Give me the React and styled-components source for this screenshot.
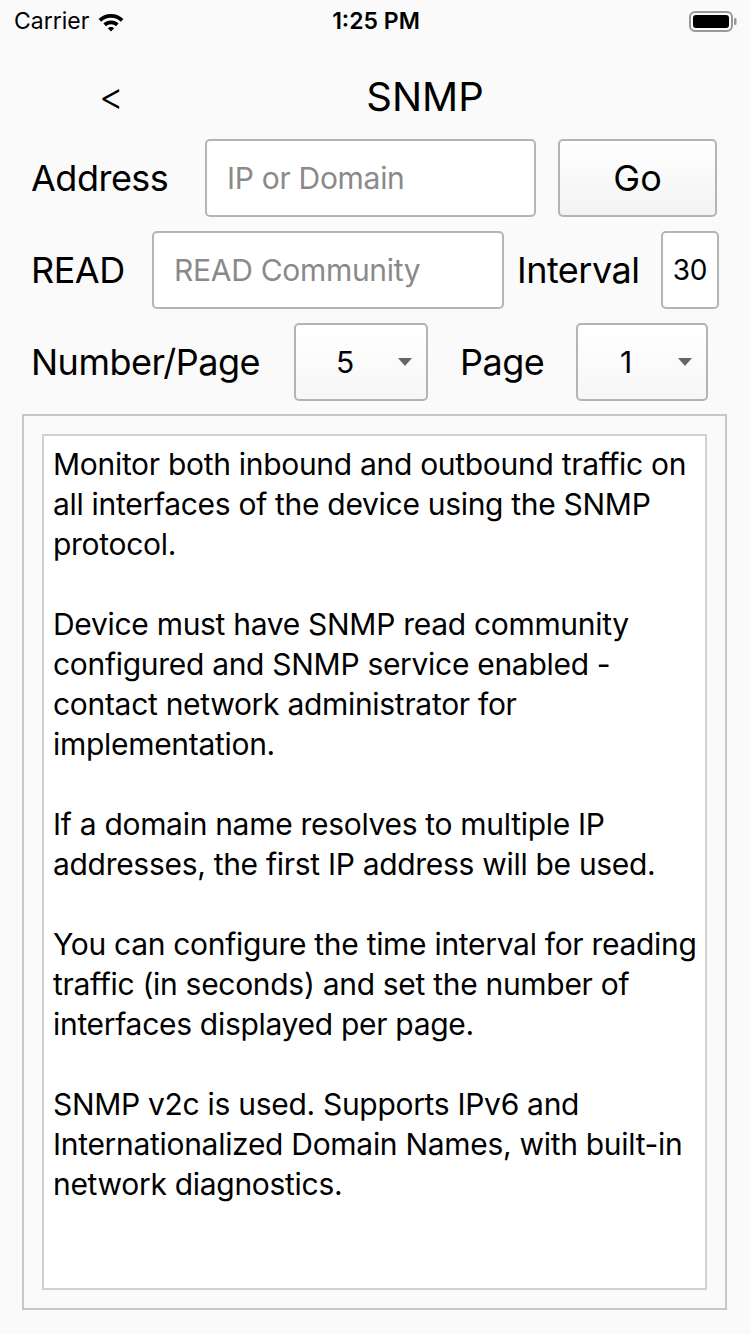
import React from 'react'
import styled, { createGlobalStyle } from 'styled-components'

const GlobalStyle = createGlobalStyle`
  html, body {
    margin: 0;
    padding: 0;
    background: #fafafa;
    font-family: Inter, "Liberation Sans", sans-serif;
    color: #000;
  }
`

const Page = styled.div`
  width: 750px;
  height: 1334px;
  background: #fafafa;
  overflow: hidden;
`

const StatusBar = styled.div`
  height: 42px;
  display: flex;
  align-items: center;
  padding: 0 12px 0 14px;
  font-size: 23px;
`

const Carrier = styled.div`
  display: flex;
  align-items: center;
  gap: 8px;
  flex: 1;
`

const Clock = styled.div`
  font-weight: 600;
  flex: 1;
  text-align: center;
`

const BatteryWrap = styled.div`
  flex: 1;
  display: flex;
  justify-content: flex-end;
`

const NavBar = styled.div`
  height: 86px;
  padding-top: 11px;
  display: flex;
  align-items: center;
`

const Back = styled.div`
  width: 125px;
  padding-left: 99px;
  box-sizing: border-box;
  font-size: 38px;
  font-weight: 300;
`

const Title = styled.div`
  width: 600px;
  text-align: center;
  font-size: 40px;
`

const Rows = styled.div`
  display: flex;
  flex-direction: column;
  gap: 14px;
  padding-left: 31px;
`

const Row = styled.div`
  display: flex;
  align-items: center;
  height: 78px;
`

const Label = styled.div`
  width: ${p => p.$w}px;
  margin-right: ${p => p.$gap}px;
  font-size: 36px;
  white-space: nowrap;
  letter-spacing: -0.5px;
`

const Field = styled.div`
  width: ${p => p.$w}px;
  height: 78px;
  margin-right: ${p => p.$gap || 0}px;
  box-sizing: border-box;
  border: 2px solid #b4b4b4;
  border-radius: 5px;
  background: #fff;
  display: flex;
  align-items: center;
  justify-content: ${p => (p.$center ? 'center' : 'flex-start')};
  padding: 0 ${p => (p.$center ? 0 : 20)}px;
  font-size: ${p => (p.$small ? 28 : 30)}px;
  letter-spacing: -0.3px;
  color: ${p => (p.$placeholder ? '#8a8a8a' : '#000')};
`

const Button = styled.div`
  width: 159px;
  height: 78px;
  box-sizing: border-box;
  border: 2px solid #b4b4b4;
  border-radius: 5px;
  background: linear-gradient(#ffffff, #f3f3f3);
  display: flex;
  align-items: center;
  justify-content: center;
  font-size: 36px;
`

const Select = styled.div`
  width: ${p => p.$w}px;
  height: 78px;
  margin-right: ${p => p.$gap || 0}px;
  box-sizing: border-box;
  border: 2px solid #b4b4b4;
  border-radius: 5px;
  background: linear-gradient(#ffffff, #f7f7f7);
  display: flex;
  align-items: center;
  padding-left: ${p => p.$pl}px;
  padding-right: 14px;
  font-size: 30px;
`

const SelectValue = styled.span`
  flex: 1;
`

const Caret = styled.span`
  width: 0;
  height: 0;
  border-left: 7px solid transparent;
  border-right: 7px solid transparent;
  border-top: 8px solid #666;
`

const Panel = styled.div`
  margin: 13px 23px 0 22px;
  height: 896px;
  box-sizing: border-box;
  border: 2px solid #c8c8c8;
  padding: 18px;
`

const TextBox = styled.div`
  height: 100%;
  box-sizing: border-box;
  border: 2px solid #d0d0d0;
  background: #fff;
  padding: 8px 9px;
  font-size: 30px;
  line-height: 40px;
  white-space: pre;
  letter-spacing: -0.3px;
`

const Wifi = () => (
  <svg width="28" height="22" viewBox="0 0 28 22">
    <path d="M14 4C9 4 4.8 5.9 1.6 9l2.6 2.7C6.7 9.2 10.2 7.7 14 7.7s7.3 1.5 9.8 4L26.4 9C23.2 5.9 19 4 14 4z" fill="#000" />
    <path d="M14 10.5c-3 0-5.7 1.2-7.6 3.1l2.6 2.6c1.300-1.3 3-2 5-2s3.7.7 5 2l2.6-2.6C19.7 11.7 17 10.5 14 10.5z" fill="#000" />
    <path d="M14 17c-1.2 0-2.3.5-3.1 1.2L14 21.4l3.1-3.2C16.3 17.5 15.2 17 14 17z" fill="#000" />
  </svg>
)

const Battery = () => (
  <svg width="50" height="24" viewBox="0 0 50 24">
    <rect x="2" y="3" width="42" height="19" rx="5" fill="none" stroke="#999" strokeWidth="2" />
    <rect x="5" y="6" width="36" height="13" rx="3" fill="#000" />
    <rect x="46" y="9" width="2.5" height="7" rx="1" fill="#999" />
  </svg>
)

const text = `Monitor both inbound and outbound traffic on
all interfaces of the device using the SNMP
protocol.

Device must have SNMP read community
configured and SNMP service enabled -
contact network administrator for
implementation.

If a domain name resolves to multiple IP
addresses, the first IP address will be used.

You can configure the time interval for reading
traffic (in seconds) and set the number of
interfaces displayed per page.

SNMP v2c is used. Supports IPv6 and
Internationalized Domain Names, with built-in
network diagnostics.`

export default function App() {
  return (
    <Page>
      <GlobalStyle />
      <StatusBar>
        <Carrier>
          Carrier <Wifi />
        </Carrier>
        <Clock>1:25 PM</Clock>
        <BatteryWrap>
          <Battery />
        </BatteryWrap>
      </StatusBar>
      <NavBar>
        <Back>&lt;</Back>
        <Title>SNMP</Title>
      </NavBar>
      <Rows>
        <Row>
          <Label $w={139} $gap={35}>Address</Label>
          <Field $w={331} $gap={22} $placeholder>IP or Domain</Field>
          <Button>Go</Button>
        </Row>
        <Row>
          <Label $w={97} $gap={24}>READ</Label>
          <Field $w={352} $gap={13} $placeholder>READ Community</Field>
          <Label $w={122} $gap={22}>Interval</Label>
          <Field $w={58} $center $small>30</Field>
        </Row>
        <Row>
          <Label $w={230} $gap={33}>Number/Page</Label>
          <Select $w={134} $gap={32} $pl={40}>
            <SelectValue>5</SelectValue>
            <Caret />
          </Select>
          <Label $w={83} $gap={33}>Page</Label>
          <Select $w={132} $pl={42}>
            <SelectValue>1</SelectValue>
            <Caret />
          </Select>
        </Row>
      </Rows>
      <Panel>
        <TextBox>{text}</TextBox>
      </Panel>
    </Page>
  )
}
